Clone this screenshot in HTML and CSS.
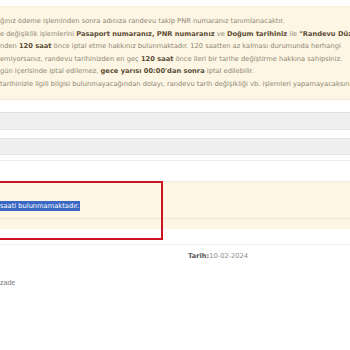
FILE: index.html
```html
<!DOCTYPE html>
<html lang="tr">
<head>
<meta charset="utf-8">
<link rel="stylesheet" href="styles.css">
</head>
<body>
<div class="page">
  <div class="notice">
    <p class="line">ğınız ödeme işleminden sonra adınıza randevu takip PNR numaranız tanımlanacaktır.</p>
    <p class="line">e değişiklik işlemlerini <b>Pasaport numaranız, PNR numaranız</b> ve <b>Doğum tarihiniz</b> ile <b>"Randevu Düzenleme"</b></p>
    <p class="line">nden <b>120 saat</b> önce iptal etme hakkınız bulunmaktadır. 120 saatten az kalması durumunda herhangi</p>
    <p class="line">emiyorsanız, randevu tarihinizden en geç <b>120 saat</b> önce ileri bir tarihe değiştirme hakkına sahipsiniz.</p>
    <p class="line">gün içerisinde iptal edilemez, <b>gece yarısı 00:00'dan sonra</b> iptal edilebilir.</p>
    <p class="line">tarihinizle ilgili bilgisi bulunmayacağından dolayı, randevu tarih değişikliği vb. işlemleri yapamayacaksınız.</p>
  </div>
  <div class="bar bar-one"></div>
  <div class="bar bar-two"></div>
  <div class="rule"></div>
  <div class="alert">
    <div class="alert-body"><span class="selected">saati bulunmamaktadır.</span></div>
    <div class="alert-foot"></div>
    <div class="highlight-frame"></div>
  </div>
  <div class="rule rule-low"></div>
  <div class="meta">
    <span class="date"><b>Tarih:</b>10-02-2024</span>
  </div>
  <div class="author">zade</div>
</div>
</body>
</html>
```
FILE: styles.css
```css
html, body {
  margin: 0;
  padding: 0;
  background: #ffffff;
}

.page {
  width: 350px;
  height: 350px;
  overflow: hidden;
  position: relative;
  font-family: "DejaVu Sans", "Open Sans", sans-serif;
}

.notice {
  margin-top: 6px;
  height: 94px;
  box-sizing: border-box;
  padding-top: 8px;
  background: #fdf6e4;
  border-top: 1px solid #f6efdc;
  border-bottom: 1px solid #f3ead3;
}

.line {
  margin: 0;
  white-space: nowrap;
  font-size: 6.7px;
  line-height: 12.6px;
  color: #8f8674;
}

.line b {
  color: #5b4d36;
  font-weight: 700;
}

.bar {
  background: #efefef;
  border-top: 1px solid #e1e1e1;
  border-bottom: 1px solid #e6e6e6;
}

.bar-one {
  margin-top: 12px;
  height: 16px;
}

.bar-two {
  margin-top: 8px;
  height: 15px;
}

.rule {
  margin-top: 5px;
  height: 1px;
  background: #ededed;
}

.alert {
  position: relative;
  margin-top: 20px;
  background: #fdf6e4;
  border-top: 1px solid #f4ecd6;
}

.alert-body {
  height: 37px;
  box-sizing: border-box;
  padding-top: 19px;
  display: flex;
  align-items: flex-start;
  border-bottom: 1px solid #f1e7cf;
  font-size: 6.7px;
  color: #ffffff;
}

.selected {
  background: #3a68c4;
  padding: 1px 1px 1px 0;
  line-height: 8px;
}

.alert-foot {
  height: 10px;
}

.highlight-frame {
  position: absolute;
  left: -10px;
  top: -1px;
  width: 173px;
  height: 59px;
  border: 2px solid #cc1424;
  box-sizing: border-box;
  pointer-events: none;
}

.rule-low {
  margin-top: 15px;
  background: #eeeeee;
}

.meta {
  padding-left: 188px;
  margin-top: 6px;
  font-size: 6.7px;
  line-height: 10px;
  color: #8a8a8a;
}

.meta b {
  color: #555555;
  font-weight: 700;
}

.author {
  margin-top: 17px;
  font-family: "Liberation Sans", Arial, sans-serif;
  font-size: 7px;
  line-height: 10px;
  color: #7a7a7a;
}
```
